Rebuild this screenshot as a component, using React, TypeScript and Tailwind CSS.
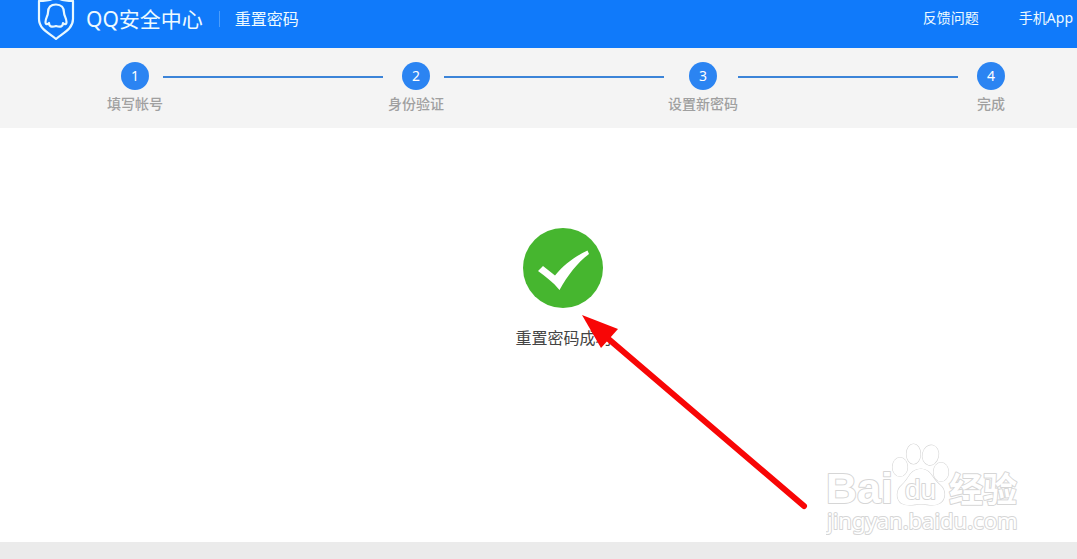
const steps = [
  { label: '填写帐号', line: 'mr-[5px]' },
  { label: '身份验证', line: 'mr-1' },
  { label: '设置新密码', line: 'mr-[19px]' },
  { label: '完成', line: '' },
]

function Shield() {
  return (
    <svg viewBox="0 0 38 42" className="h-[42px] w-[38px] shrink-0" fill="none" stroke="#e8f8ff" strokeWidth="2.2" strokeLinejoin="round">
      <path d="M19 -1C15 2 8 3 2 3V21C2 31 12 35 19 41C26 35 36 31 36 21V3C30 3 23 2 19 -1Z" />
      <path d="M19 6.500C13.500 6.500 11 10 11 14.500C11 18 8.500 20 8.500 24C8.500 27 10.500 26.500 12 25C12 28.500 14.500 29.500 19 28C23.500 29.500 26 28.500 26 25C27.500 26.500 29.500 27 29.500 24C29.500 20 27 18 27 14.500C27 10 24.500 6.500 19 6.500Z" />
    </svg>
  )
}

function Header() {
  return (
    <header className="flex h-12 items-center justify-between bg-[#107afa] pl-[37px] pr-1 text-[#eefaff]">
      <div className="-mt-[10px] flex items-center">
        <Shield />
        <span className="ml-[11px] text-[21px] leading-8">QQ安全中心</span>
        <span className="ml-4 h-4 w-px bg-[#4b9dfb]" />
        <h1 className="ml-[15px] text-base">重置密码</h1>
      </div>
      <nav className="-mt-3 flex gap-10 text-sm">
        <a href="#feedback">反馈问题</a>
        <a href="#app">手机App</a>
      </nav>
    </header>
  )
}

function Steps() {
  return (
    <ol className="flex h-20 bg-[#f4f4f4] pt-[14px] pl-[107px] pr-[72px]">
      {steps.map((step, i) => (
        <li key={step.label} className={i < steps.length - 1 ? 'flex grow basis-auto' : 'flex'}>
          <div className="flex shrink-0 flex-col items-center">
            <span className="flex size-7 items-center justify-center rounded-full bg-[#2b84f2] text-sm text-white">{i + 1}</span>
            <span className="mt-1 text-sm leading-5 font-medium text-[#a0a0a0]">{step.label}</span>
          </div>
          {step.line && <span className={`mt-[14px] h-0.5 grow bg-[#3c84d8] ${step.line}`} />}
        </li>
      ))}
    </ol>
  )
}

function Result() {
  return (
    <div className="relative flex flex-col items-center">
      <svg viewBox="0 0 80 80" className="size-20">
        <circle cx="40" cy="40" r="40" fill="#46b62f" />
        <path d="M15 43L20 38L32 47.500C41 36 53 28 64.500 22.500L66 26C54 35 45 47 36.500 62C30 54 22 48 15 43Z" fill="#fff" />
      </svg>
      <p className="mt-[18px] text-base text-[#444444]">重置密码成功</p>
      <svg viewBox="0 0 228 196" className="absolute top-[86px] left-[66px] h-[196px] w-[228px]">
        <path d="M24 22L223 192" stroke="#f80606" strokeWidth="6" strokeLinecap="round" />
        <path d="M1 1L37 15L20 34Z" fill="#f80606" />
      </svg>
    </div>
  )
}

function Watermark() {
  return (
    <svg
      viewBox="0 0 200 100"
      className="absolute right-[51px] bottom-1 h-[100px] w-[200px]"
      fill="#ffffff"
      stroke="#d6d6d6"
      strokeWidth="2"
      strokeLinejoin="round"
      style={{ paintOrder: 'stroke' }}
    >
      <text x="0" y="65" fontFamily="Liberation Sans, sans-serif" fontWeight="700" fontSize="43">Bai</text>
      <g strokeWidth="1.200">
        <ellipse cx="74" cy="29" rx="7.500" ry="9.500" />
        <ellipse cx="87.500" cy="16" rx="7" ry="10" />
        <ellipse cx="104.500" cy="17" rx="8" ry="10" transform="rotate(12 104 17)" />
        <ellipse cx="115" cy="34" rx="7.500" ry="9.500" />
        <path d="M95 31C84 31 83 41 76 47C70 52 70 61 75 65C82 69 88 66 95 66C102 66 108 69 114 65C120 61 120 52 114 47C106 41 105 31 95 31Z" />
      </g>
      <text x="79" y="61" fontFamily="Liberation Sans, sans-serif" fontSize="28">du</text>
      <text x="123" y="64" fontFamily="Noto Sans CJK SC, sans-serif" fontWeight="700" fontSize="34">经验</text>
      <text x="1" y="91" fontFamily="Noto Sans, sans-serif" fontSize="22">jingyan.baidu.com</text>
    </svg>
  )
}

export default function App() {
  return (
    <div className="flex min-h-screen flex-col bg-white font-['Noto_Sans','Noto_Sans_CJK_SC',sans-serif]">
      <Header />
      <Steps />
      <main className="relative flex grow justify-center pt-[100px] pl-[50px]">
        <Result />
        <Watermark />
      </main>
      <footer className="h-[17px] bg-[#ebebeb]" />
    </div>
  )
}
